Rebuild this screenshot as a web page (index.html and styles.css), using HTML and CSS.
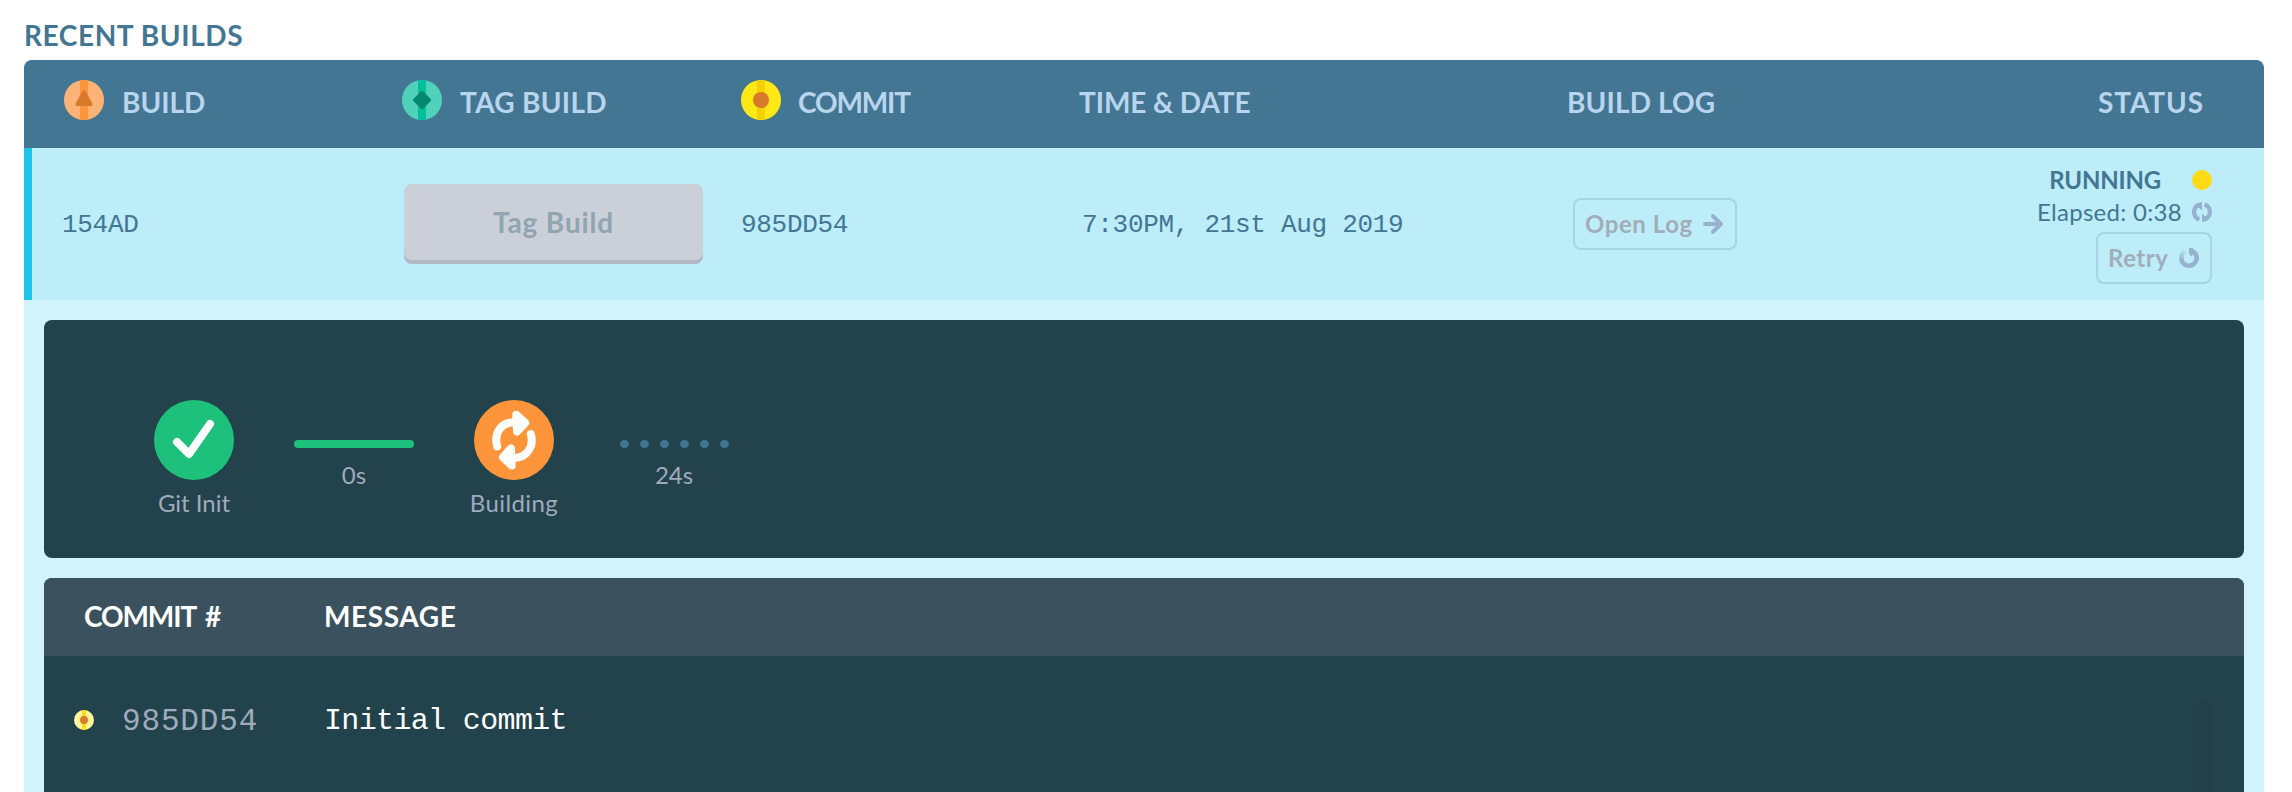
FILE: index.html
```html
<!DOCTYPE html>
<html lang="en">
<head>
<meta charset="utf-8">
<title>Recent Builds</title>
<link rel="stylesheet" href="styles.css">
</head>
<body>
<main class="page">
  <h1 class="title"><span class="t-title">RECENT BUILDS</span></h1>
  <section class="table">
    <header class="head grid">
      <div class="cell">
        <svg class="badge" viewBox="0 0 40 40"><circle cx="20" cy="20" r="20" fill="#ffb376"/><path d="M16 .4a20 20 0 0 1 8 0v39.2a20 20 0 0 1-8 0z" fill="#ff953a"/><path d="M20 11.8 27 24.400H13z" fill="#d9792b" stroke="#d9792b" stroke-width="3.2" stroke-linejoin="round"/></svg>
        <span class="t-build">BUILD</span>
      </div>
      <div class="cell">
        <svg class="badge" viewBox="0 0 40 40"><circle cx="20" cy="20" r="20" fill="#4fd2b9"/><path d="M16 .4a20 20 0 0 1 8 0v39.2a20 20 0 0 1-8 0z" fill="#00bf9c"/><path d="M20 12.4 27.6 20 20 27.6 12.4 20z" fill="#04886e" stroke="#04886e" stroke-width="3" stroke-linejoin="round"/></svg>
        <span class="t-tag">TAG BUILD</span>
      </div>
      <div class="cell">
        <svg class="badge" viewBox="0 0 40 40"><circle cx="20" cy="20" r="20" fill="#ffe815"/><path d="M16 .4a20 20 0 0 1 8 0v39.2a20 20 0 0 1-8 0z" fill="#f7d002"/><circle cx="20" cy="20" r="8" fill="#d9792b"/></svg>
        <span class="t-commit">COMMIT</span>
      </div>
      <div class="cell"><span class="t-time">TIME &amp; DATE</span></div>
      <div class="cell"><span class="t-log">BUILD LOG</span></div>
      <div class="cell cell-status"><span class="t-status">STATUS</span></div>
    </header>
    <div class="row grid">
      <div class="mono">154AD</div>
      <div><button class="tag-button"><span class="t-tagbtn">Tag Build</span></button></div>
      <div class="mono">985DD54</div>
      <div class="mono mono-date">7:30PM, 21st Aug 2019</div>
      <div class="log-cell">
        <button class="outline open-log"><span class="t-open">Open Log</span>
          <svg class="icon" viewBox="0 0 20 20" fill="none" stroke="#97b1cf" stroke-width="4" stroke-linecap="round" stroke-linejoin="round"><path d="M2 10H17M10 2.200 18 10l-8 7.800"/></svg>
        </button>
      </div>
      <div class="status">
        <div class="status-line"><strong class="t-running">RUNNING</strong><i class="dot"></i></div>
        <div class="status-line elapsed"><span class="t-elapsed">Elapsed: 0:38</span>
          <svg class="icon" viewBox="0 0 20 20" fill="none" stroke="#97b1cf" stroke-width="4.2"><path d="M7.400 17.400A7.800 7.800 0 0 1 6.500 3M12.600 2.600A7.800 7.800 0 0 1 13.500 17"/><path d="M4.500 1.500 10 0V8.500L6 5zM15.500 18.500 10 20V11.500L14 15z" fill="#97b1cf" stroke="none"/></svg>
        </div>
        <button class="outline retry"><span class="t-retry">Retry</span>
          <svg class="icon" viewBox="0 0 20 20" fill="none" stroke="#97b1cf" stroke-width="4.6"><path d="M12 2.600A7.700 7.700 0 1 1 2.300 10"/><path d="M2.300 10.200A7.700 7.700 0 0 1 3.600 5.800" opacity=".65"/><path d="M3.500 5.900A7.700 7.700 0 0 1 6 3.400" opacity=".25"/><path d="M10 0h4v6l-1.500 2.500L10 6z" fill="#97b1cf" stroke="none"/></svg>
        </button>
      </div>
    </div>
    <div class="details">
      <section class="pipeline">
        <div class="stage">
          <svg class="stage-icon" viewBox="0 0 80 80"><circle cx="40" cy="40" r="40" fill="#1ec17c"/><path d="M23 42 35 54 56 24" fill="none" stroke="#fff" stroke-width="8" stroke-linecap="round" stroke-linejoin="round"/></svg>
          <span class="t-git">Git Init</span>
        </div>
        <div class="link"><i class="bar"></i><span class="t-0s">0s</span></div>
        <div class="stage">
          <svg class="stage-icon" viewBox="0 0 80 80"><circle cx="40" cy="40" r="40" fill="#ff953a"/><g fill="none" stroke="#fff" stroke-width="8" stroke-linecap="round" stroke-linejoin="round"><path d="M23.200 46.500C19.500 33 27 22 41 22.200M56.800 34C60.500 47 52.500 58.300 39 58"/><path d="M42.300 14.800 51.200 23 43 31.500zM37.700 65.500 29 57.300 37 48.500z" fill="#fff"/></g></svg>
          <span class="t-building">Building</span>
        </div>
        <div class="link"><i class="dots"><b></b><b></b><b></b><b></b><b></b><b></b></i><span class="t-24s">24s</span></div>
      </section>
      <section class="commits">
        <header class="commits-head"><span class="t-chash">COMMIT #</span><span class="t-message">MESSAGE</span></header>
        <div class="commits-body">
          <div class="commit">
            <svg class="icon" viewBox="0 0 40 40"><circle cx="20" cy="20" r="20" fill="#fff59a"/><path d="M16 .4a20 20 0 0 1 8 0v39.2a20 20 0 0 1-8 0z" fill="#ffdb15"/><circle cx="20" cy="20" r="8" fill="#d9792b"/></svg>
            <span class="hash">985DD54</span>
            <span class="message">Initial commit</span>
          </div>
          <i class="scrollbar"></i>
        </div>
      </section>
    </div>
  </section>
</main>
</body>
</html>
```
FILE: styles.css
```css
* { box-sizing: border-box; }
body { margin: 0; background: #fff; font-family: Lato, "Noto Sans", sans-serif; color: #437693; }
.page { height: 792px; overflow: hidden; padding: 0 28px 0 24px; display: flex; flex-direction: column; }
.title { margin: 0; height: 60px; padding: 18px 0 0; font-size: 28px; line-height: 34px; font-weight: 700; }
.table { flex: 1; display: flex; flex-direction: column; border-radius: 8px 8px 0 0; overflow: hidden; background: #d1f3fc; }
.grid { display: grid; grid-template-columns: 338px 339px 338px 488px 402px 1fr; align-items: center; }
.head { height: 88px; flex: none; padding: 0 60px 8px 40px; background: #437693; color: #b9d5ee; font-size: 28px; font-weight: 700; }
.cell { display: flex; align-items: center; gap: 18px; height: 40px; line-height: 34px; white-space: nowrap; }
.cell > span { padding-top: 3px; }
.cell-status { justify-content: flex-end; }
.badge { width: 40px; height: 40px; flex: none; display: block; }
.row { height: 152px; flex: none; background: #bcedf9; border-left: 8px solid #1ec3e8; padding: 0 52px 0 30px; grid-template-columns: 342px 337px 341px 491px 400px 1fr; }
.mono { padding-top: 1px; font-family: "Liberation Mono", monospace; font-size: 26px; letter-spacing: -0.3px; white-space: nowrap; }
button { font: inherit; border: 0; margin: 0; padding: 0; background: none; }
.tag-button { display: block; width: 299px; height: 80px; padding-bottom: 4px; border-radius: 8px; background: #cacfd8; box-shadow: inset 0 -4px #b3b9c4; color: #91a5b1; font-size: 28px; font-weight: 700; }
.outline { height: 52px; border: 2px solid #a6d4e1; border-radius: 8px; display: flex; align-items: center; justify-content: space-between; color: #a2adba; font-size: 24px; font-weight: 700; white-space: nowrap; }
.outline span { padding-bottom: 2px; }
.open-log { width: 164px; padding: 0 12px 0 10px; }
.retry { width: 116px; padding: 0 11px 0 10px; }
.icon { width: 20px; height: 20px; flex: none; display: block; }
.status { display: flex; flex-direction: column; align-items: flex-end; font-size: 24px; white-space: nowrap; }
.status-line { display: flex; align-items: center; justify-content: flex-end; height: 32px; }
.status-line strong { font-weight: 700; margin-right: 31px; padding-bottom: 2px; }
.elapsed { gap: 10px; margin-bottom: 4px; }
.elapsed span { padding-bottom: 2px; }
.dot { width: 20px; height: 20px; border-radius: 50%; background: #ffdb15; }
.details { flex: 1; display: flex; flex-direction: column; gap: 20px; padding: 20px 20px 0; }
.pipeline { height: 238px; flex: none; border-radius: 8px; background: #22424c; padding: 80px 0 0 90px; display: flex; color: #9fabbc; font-size: 24px; }
.stage { width: 120px; display: flex; flex-direction: column; align-items: center; line-height: 30px; gap: 8px; }
.stage-icon { width: 80px; height: 80px; display: block; }
.link { width: 200px; padding-top: 40px; display: flex; flex-direction: column; align-items: center; gap: 12px; line-height: 30px; }
.bar { width: 120px; height: 8px; border-radius: 4px; background: #1ec17c; }
.dots { display: flex; gap: 11px; height: 8px; }
.dots b { width: 9px; height: 8px; border-radius: 50%; background: #437693; }
.commits { flex: 1; display: flex; flex-direction: column; border-radius: 8px 8px 0 0; overflow: hidden; background: #22424c; color: #fff; }
.commits-head { height: 78px; flex: none; display: grid; grid-template-columns: 240px 1fr; align-items: center; padding: 0 0 2px 40px; background: #3b525e; font-size: 28px; font-weight: 700; }
.commits-body { flex: 1; display: flex; justify-content: space-between; padding: 44px 32px 0 30px; }
.commit { display: flex; align-items: center; height: 40px; font-family: "Liberation Mono", monospace; white-space: nowrap; }
.hash { margin-left: 28px; width: 202px; padding-top: 2px; font-size: 31px; letter-spacing: .85px; color: #9fabbc; }
.message { padding-top: 2px; font-size: 30px; letter-spacing: -.65px; }
.scrollbar { width: 14px; border-radius: 7px 7px 0 0; background: #233f4a; }

/* Tracking per label */
.t-title { letter-spacing: .6px; }
.t-tag { letter-spacing: .3px; }
.t-commit { letter-spacing: -1.15px; margin-left: -1px; }
.t-time { letter-spacing: -.1px; }
.t-log { letter-spacing: .15px; }
.t-status { letter-spacing: .9px; }
.t-tagbtn { letter-spacing: .85px; }
.t-open { letter-spacing: .55px; }
.t-running { letter-spacing: -.2px; }
.t-elapsed { letter-spacing: .3px; }
.t-retry { letter-spacing: .5px; }
.t-building { letter-spacing: .4px; }
.t-chash { letter-spacing: -1.1px; word-spacing: 4px; }
.t-message { letter-spacing: .6px; }
```
